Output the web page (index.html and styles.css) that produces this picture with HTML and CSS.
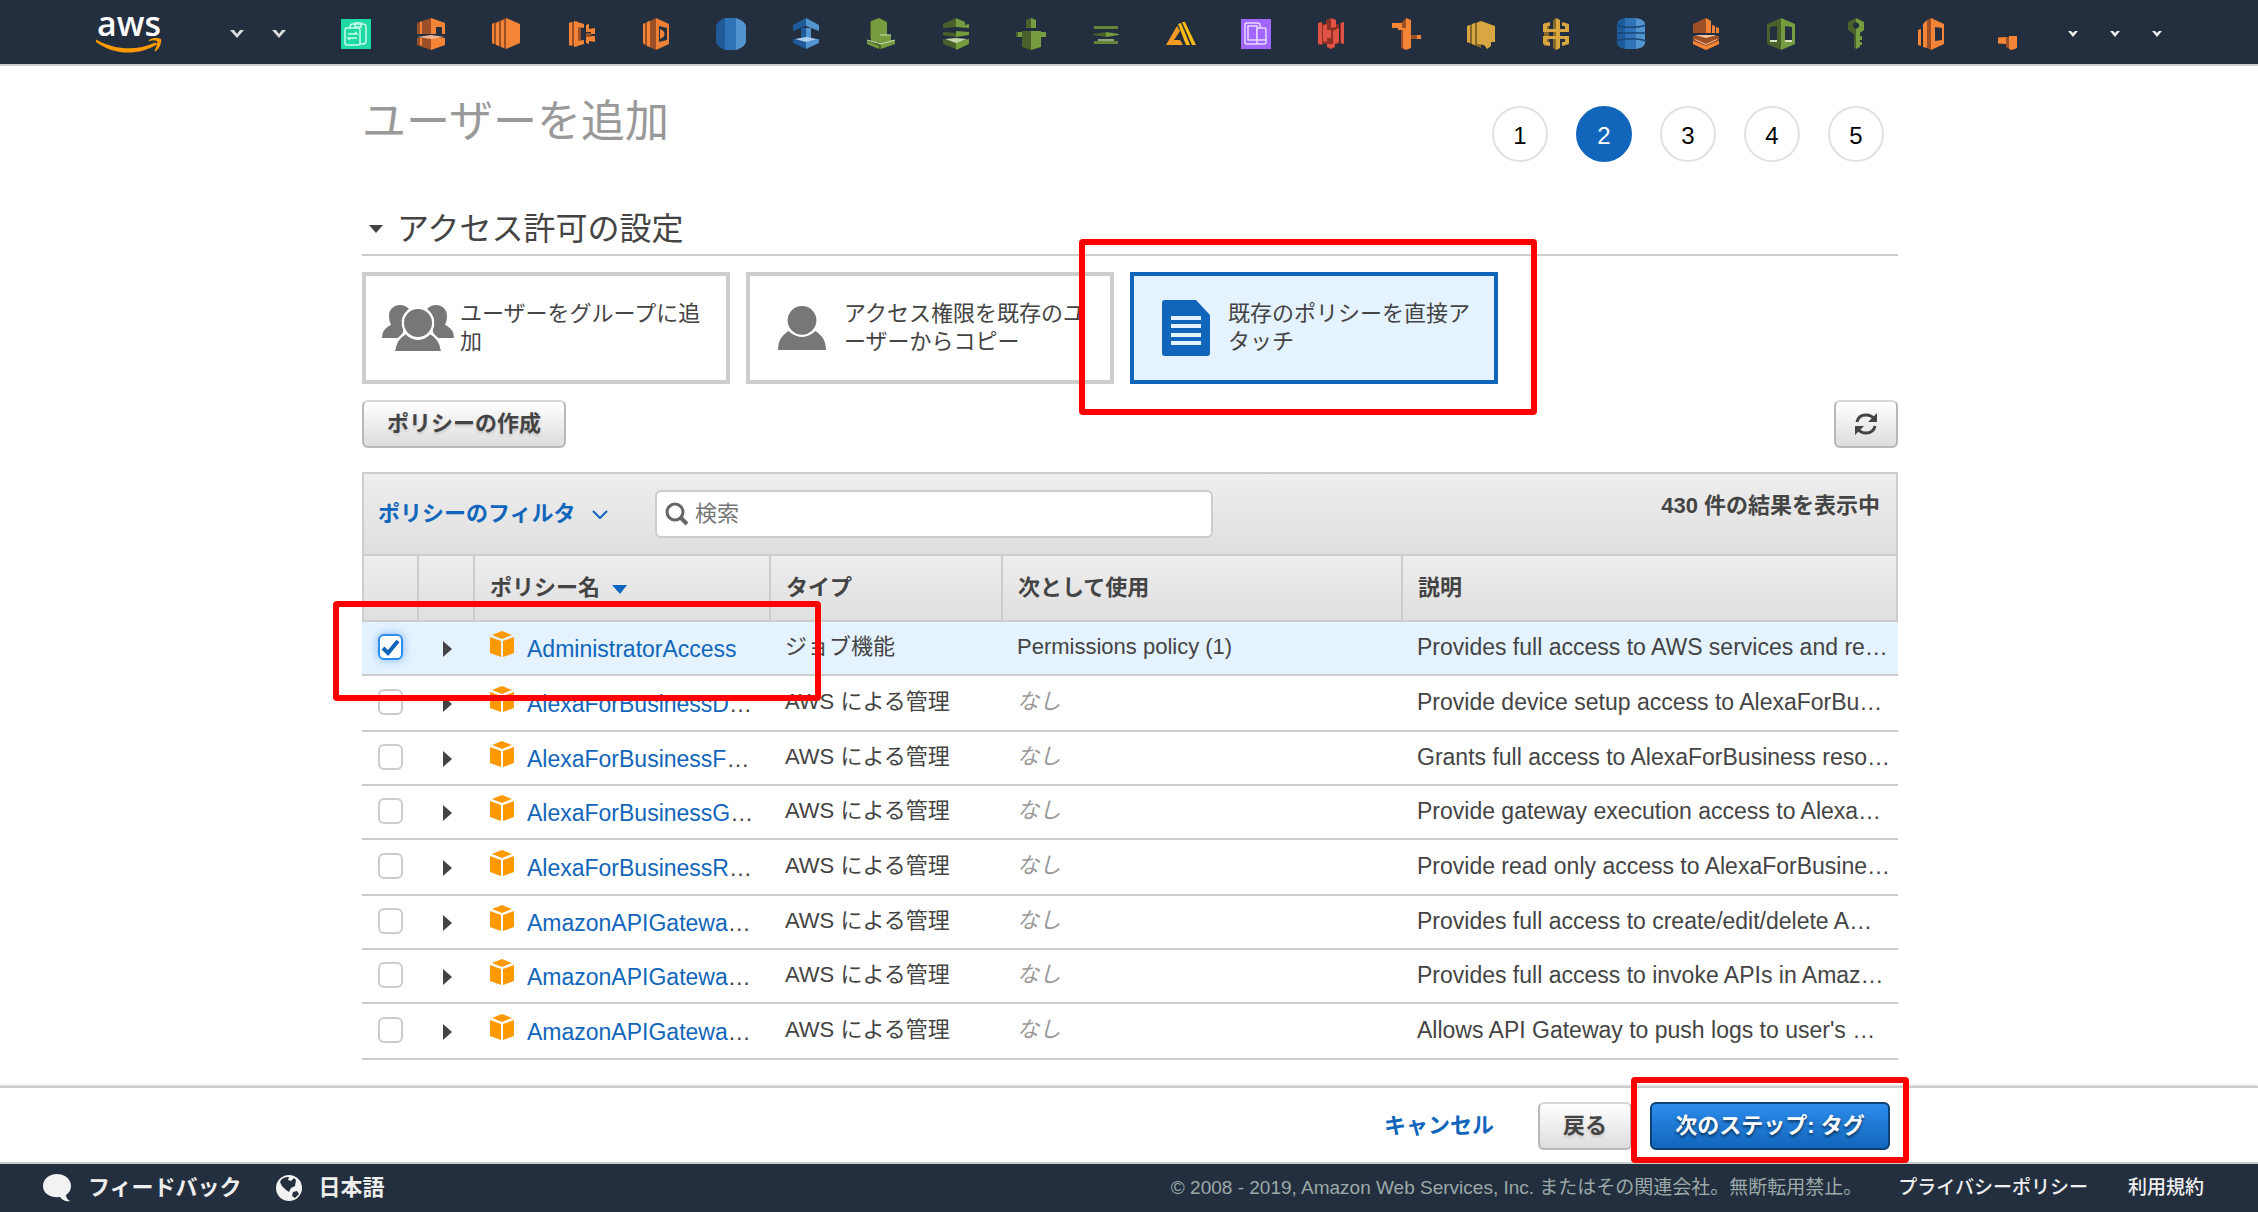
FILE: index.html
```html
<!DOCTYPE html>
<html lang="ja">
<head>
<meta charset="utf-8">
<meta name="viewport" content="width=device-width, initial-scale=1">
<title>ユーザーを追加</title>
<link rel="stylesheet" href="styles.css">
</head>
<body>
<svg class="defs" aria-hidden="true">
  <symbol id="cube" viewBox="0 0 24 26"><path fill="#f90" d="M12 0l10 4-10 4L2 4zM0 6l11 4v16L0 22zM24 6l-11 4v16l11-4z"/></symbol>
  <symbol id="expand" viewBox="0 0 9 16"><path fill="#444" d="M0 0l9 8-9 8z"/></symbol>
  <symbol id="caret" viewBox="0 0 14 8"><path d="M0 0h4l3 4 3-4h4L7 8z"/></symbol>
  <symbol id="caret-small" viewBox="0 0 10 6"><path d="M0 0h3l2 2 2-2h3L5 6z"/></symbol>
</svg>

<header class="topbar">
  <a class="logo" href="#" aria-label="aws">
    <span class="logo-text">aws</span>
    <svg class="logo-smile" viewBox="0 0 66 15" aria-hidden="true"><path fill="#f90" d="M1 2c18 10 40 11 57 3 2-1 4 1 2 2C42 18 17 17 0 4c-1-1 0-3 1-2zM53 2c4-3 10-2 12-1 1 3-1 9-5 12-1 1-2 0-1-1 1-3 3-7 2-9-2-1-5-1-7 0-1 0-2 0-1-1z"/></svg>
  </a>
  <button class="nav-caret" aria-label="サービス"><svg viewBox="0 0 14 8"><use href="#caret"/></svg></button>
  <button class="nav-caret" aria-label="リソースグループ"><svg viewBox="0 0 14 8"><use href="#caret"/></svg></button>
  <nav class="shortcuts" aria-label="ショートカット">
    <a href="#" aria-label="ショートカット 1"><svg viewBox="0 0 32 32"><path fill="#1ed9a4" d="M1 1h30v30H1z"/><g fill="none" stroke="#c8fbe9" stroke-width="1.5"><rect x="10" y="6" width="16" height="20" rx="3"/><rect x="5" y="10" width="15" height="17" rx="2" fill="#1ed9a4"/><path d="M15 5h6v4h-6zM8 16h9l-2-2M17 20H8l2 2"/></g></svg></a>
    <a href="#" aria-label="ショートカット 2"><svg viewBox="0 0 32 32"><path fill="#9d5025" d="M2 5l14-5v16H2zM2 20h14v12L2 27z"/><path fill="#f58536" d="M5 4l2-1v13H5zM16 0l14 5v11h-3V9h-6v7h-5zM16 20h14v7l-14 5zM5 20h2v8l-2-1z"/><path fill="#f2b48c" d="M2 19l14-2 14 2-14 2z"/></svg></a>
    <a href="#" aria-label="ショートカット 3"><svg viewBox="0 0 32 32"><path fill="#9d5025" d="M2 6l14-6v31L2 25z"/><path fill="#f58536" d="M2 6l2-1v21l-2-1zM6 5l3-1v24l-3-1zM11 3l3-1v28l-3-1zM16 0l14 6v19l-14 6z"/></svg></a>
    <a href="#" aria-label="ショートカット 4"><svg viewBox="0 0 32 32"><path fill="#9d5025" d="M4 5l8-2v26l-8-3zM12 8l4 1v14l-4 1zM21 15h5v4h-5z"/><path fill="#f58536" d="M4 5l3-1v24l-3-1zM9 3l10 3v4l-6-1v14l6-1v4L9 29zM21 7l3-1v5l6-1v6h-4v-2h-5zM21 19h5v-1h4v6l-6-1v3l-3-1z"/></svg></a>
    <a href="#" aria-label="ショートカット 5"><svg viewBox="0 0 32 32"><path fill="#9d5025" d="M3 6l13-6v32L3 26z"/><path fill="#f58536" d="M3 6l2-1v21l-2-1zM7 4l3-1v26l-3-1z"/><path fill="#ee8038" fill-rule="evenodd" d="M16 0l13 6v20l-13 6zM19 8v16l8-2V10z"/><path fill="#f58536" d="M20 11c6 2 6 8 0 10z"/></svg></a>
    <a href="#" aria-label="ショートカット 6"><svg viewBox="0 0 32 32"><path fill="#1f5b98" d="M10 0v32c-5-2-9-5-9-9V9c0-4 4-7 9-9z"/><path fill="#2e73b8" d="M10 0h11v32H10z"/><path fill="#5294cf" d="M21 0c6 2 10 5 10 9v14c0 4-4 7-10 9z"/></svg></a>
    <a href="#" aria-label="ショートカット 7"><svg viewBox="0 0 32 32"><path fill="#1f5b98" d="M3 7l13-7v8L3 13zM11 10h5v11h-5zM3 21h13v10L3 25z"/><path fill="#5294cf" d="M16 0l13 7v6L16 8zM16 10h5v11h-5zM16 21h13v4l-13 6z"/><path fill="#a8cdee" d="M5 21l11-2 11 2-11 3z"/></svg></a>
    <a href="#" aria-label="ショートカット 8"><svg viewBox="0 0 32 32"><path fill="#4b612c" d="M5 4l6-2v20l-6-2zM2 22l14 4v5L2 26z"/><path fill="#759c3e" d="M6 3l8-3 8 4v20H6zM15 17h11v5l4 1v3l-14 5v-5l-3-1zM2 23l12 5v3L2 26z"/><path fill="none" stroke="#cfe0b4" d="M2 22l14 4 14-4M15 17h11"/></svg></a>
    <a href="#" aria-label="ショートカット 9"><svg viewBox="0 0 32 32"><path fill="#4b612c" d="M3 6l13-6v9L3 10zM3 14l13 1v4L3 17zM3 21l13 3v7L3 26z"/><path fill="#759c3e" d="M16 0l9 4v3l4-1v4l-13-1zM16 13l13 1v3l-13 2zM16 24l13-3v5l-13 6z"/><path fill="#c3d6a6" d="M5 21l11-1 11 1-11 4z"/></svg></a>
    <a href="#" aria-label="ショートカット 10"><svg viewBox="0 0 32 32"><path fill="#4b612c" d="M11 2l5-2v10h-5zM7 13h9v19l-9-3zM1 14h4v5H1z"/><path fill="#759c3e" d="M16 0l5 2v8h-5zM16 13h10v1h5v5h-5v10l-10 3zM3 14h4v5H3z"/></svg></a>
    <a href="#" aria-label="ショートカット 11"><svg viewBox="0 0 32 32"><path fill="#648437" d="M4 8h24v3H4zM4 23h24v3H4z"/><path fill="#4b612c" d="M3 16l13-2v5L3 17z"/><path fill="#759c3e" d="M16 14l13 2v1l-13 2z"/><path fill="#93a67d" d="M8 21h16v2H8z"/></svg></a>
    <a href="#" aria-label="ショートカット 12"><svg viewBox="0 0 32 32"><path fill="#f49b25" d="M12 8l3 5-6 9h6l3 5H1z"/><path fill="#fdb913" d="M13 6l3-1 9 22h-4zM17 4h3l11 23h-4z"/></svg></a>
    <a href="#" aria-label="ショートカット 13"><svg viewBox="0 0 32 32"><path fill="#a166ff" d="M1 1h30v30H1z"/><g fill="none" stroke="#e7d8ff" stroke-width="1.5"><rect x="5" y="5" width="15" height="21" rx="2"/><rect x="8" y="8" width="9" height="14"/><rect x="17" y="10" width="9" height="16" rx="2" fill="#a166ff"/><path d="M17 22h9"/></g></svg></a>
    <a href="#" aria-label="ショートカット 14"><svg viewBox="0 0 32 32"><path fill="#8c3123" d="M7 6h17v20H7zM11 2l5-2v8h-5zM25 5l4-1v22l-4-1z"/><path fill="#e05243" d="M3 5l4-1v23l-4-1zM8 8l4-2v6h4v8h-4v4l-4-1zM16 0l5 2v7l-5 1zM18 13l6-3v14l-6 3zM12 26h8v3l-4 2-4-2zM26 5l3-1v22l-3-1z"/></svg></a>
    <a href="#" aria-label="ショートカット 15"><svg viewBox="0 0 32 32"><path fill="#9d5025" d="M11 5l5-5v32l-5-2zM21 17h8v4h-8z"/><path fill="#f58536" d="M2 5h10v5h4V0l5 2v28l-5 2-3-2V12H8v-2H2zM27 17h4v4h-4z"/></svg></a>
    <a href="#" aria-label="ショートカット 16"><svg viewBox="0 0 32 32"><path fill="#876929" d="M2 8l14-5v27L2 24z"/><path fill="#d9a741" d="M2 8l3-1v18l-3-1zM7 6l3-1v22l-3-1zM12 5l4-2 14 5v16h-4v4l-4 3-3-4-7-1z"/></svg></a>
    <a href="#" aria-label="ショートカット 17"><svg viewBox="0 0 32 32"><path fill="#876929" d="M13 2l3-2v32l-3-2zM4 5h5v23H4z"/><path fill="#d9a741" d="M16 0l4 2v28l-4 2zM3 6l7-2v4H7v3h18V8h-3V4l7 2v8H3zM3 18h26v8l-7 2v-4h3v-3H7v3h3v4l-7-2z"/></svg></a>
    <a href="#" aria-label="ショートカット 18"><svg viewBox="0 0 32 32"><path fill="#1f5b98" d="M10 0v31c-5-1-8-3-8-7V7c0-4 3-6 8-7z"/><path fill="#2e73b8" d="M10 0h11v31H10z"/><path fill="#5294cf" d="M21 0c6 1 9 3 9 7v17c0 4-3 6-9 7z"/><path fill="none" stroke="#1a4776" stroke-width="1.5" d="M1 7c8 3 22 3 30 0M1 15h30M1 23c8-3 22-3 30 0"/></svg></a>
    <a href="#" aria-label="ショートカット 19"><svg viewBox="0 0 32 32"><path fill="#9d5025" d="M3 6l13-6v15H3zM3 18h26v8l-13 6-13-6z"/><path fill="#f58536" d="M16 0l5 3v12h-5zM22 7l3 1v7h-3zM26 9l3 1v5h-3zM3 23l13 5 13-5v3l-13 6-13-6z"/><path fill="#f5c3a0" d="M5 17h22l-11 3zM5 21l11 5 11-5v1l-11 5-11-5z"/></svg></a>
    <a href="#" aria-label="ショートカット 20"><svg viewBox="0 0 32 32"><path fill="#4b612c" fill-rule="evenodd" d="M2 6l14-6v32L2 26zM5 9v13l7 1V8z"/><path fill="#759c3e" fill-rule="evenodd" d="M16 0l14 6v20l-14 6zM20 8v15l7-1V9z"/><path fill="#d5e2c2" d="M5 22h7v2H5zM20 22h7v2h-7z"/></svg></a>
    <a href="#" aria-label="ショートカット 21"><svg viewBox="0 0 32 32"><path fill="#4b612c" fill-rule="evenodd" d="M16 0L8 4v8l6 4v14l2 1V11l-3-2V6l3-2z"/><path fill="#759c3e" d="M16 0l8 4v8l-4 3v3h2v4h-2v2h2v3h-2v2l-4 2V11l3-2V6l-3-2z"/></svg></a>
    <a href="#" aria-label="ショートカット 22"><svg viewBox="0 0 32 32"><path fill="#9d5025" d="M12 2l4-2v32l-4-2z"/><path fill="#f58536" fill-rule="evenodd" d="M3 12l3-1v17l-3-1zM8 6l4-4v28l-4-1zM16 0l13 6v20l-13 6zM20 9v14l7-1V10z"/></svg></a>
    <a href="#" aria-label="ショートカット 23"><svg viewBox="0 0 32 32"><path fill="#9d5025" d="M8 19h14v13l-6-3v-3H8z"/><path fill="#f58536" d="M8 20l8-1v7l-8-1zM19 18h8v12l-5 2-3-1z"/></svg></a>
  </nav>
  <div class="account-carets">
    <button class="nav-caret small" aria-label="アカウント"><svg viewBox="0 0 10 6"><use href="#caret-small"/></svg></button>
    <button class="nav-caret small" aria-label="リージョン"><svg viewBox="0 0 10 6"><use href="#caret-small"/></svg></button>
    <button class="nav-caret small" aria-label="サポート"><svg viewBox="0 0 10 6"><use href="#caret-small"/></svg></button>
  </div>
</header>

<main class="container page">
  <div class="page-head">
    <h1>ユーザーを追加</h1>
    <ol class="steps">
      <li>1</li>
      <li class="current" aria-current="step">2</li>
      <li>3</li>
      <li>4</li>
      <li>5</li>
    </ol>
  </div>

  <h2 class="section-title">
    <svg viewBox="0 0 14 8" aria-hidden="true"><path fill="#444" d="M0 0h14L7 8z"/></svg>
    アクセス許可の設定
  </h2>

  <div class="cards">
    <button class="card">
      <span class="card-icon"><svg width="72" height="46" viewBox="0 0 72 46"><g fill="#777"><path d="M7 11C7 4 12 0 18 0c4 0 7 2 9 4-5 4-8 9-7 14-1 4 2 5 1 9-2 4-5 6-6 6H0c0-7 4-11 9-13-1-3-2-5-2-9zM65 11c0-7-5-11-11-11-4 0-7 2-9 4 5 4 8 9 7 14 1 4-2 5-1 9 2 4 5 6 6 6h15c0-7-4-11-9-13 1-3 2-5 2-9z"/><path stroke="#fff" stroke-width="2" d="M12 47c1-11 6-16 12-19 6 8 18 8 24 0 6 3 11 8 12 19z"/><ellipse cx="36" cy="18" rx="15" ry="15" stroke="#fff" stroke-width="2"/></g></svg></span>
      <span class="card-text">ユーザーをグループに追加</span>
    </button>
    <button class="card">
      <span class="card-icon"><svg width="48" height="46" viewBox="0 0 50 46"><g fill="#777"><path d="M0 46c0-11 5-16 11-20 8 8 20 8 28 0 6 4 11 9 11 20z"/><ellipse cx="25" cy="15" rx="16" ry="16" stroke="#fff" stroke-width="2"/></g></svg></span>
      <span class="card-text">アクセス権限を既存のユーザーからコピー</span>
    </button>
    <button class="card selected">
      <span class="card-icon"><svg width="48" height="56" viewBox="0 0 48 56"><path fill="#16b" d="M3 0h31l14 15v38a3 3 0 0 1-3 3H3a3 3 0 0 1-3-3V3a3 3 0 0 1 3-3z"/><path stroke="#e5f2ff" stroke-width="4" d="M9 18h30M9 26h30M9 35h30M9 43h30"/></svg></span>
      <span class="card-text">既存のポリシーを直接アタッチ</span>
      <span class="marker marker-card"></span>
    </button>
  </div>

  <div class="tools">
    <button class="btn">ポリシーの作成</button>
    <button class="btn btn-icon" aria-label="更新"><svg width="24" height="24" viewBox="0 0 24 24"><g fill="none" stroke="#444" stroke-width="3"><path d="M3 10c1-5 5-7 9-7 4 0 6 1 8 4M21 14c-1 5-5 7-9 7-4 0-6-1-8-4"/></g><path fill="#444" d="M23 1v9h-9zM1 23v-9h9z"/></svg></button>
  </div>

  <section class="policies">
    <div class="filterbar">
      <button class="filter">ポリシーのフィルタ <svg width="16" height="9" viewBox="0 0 16 9" aria-hidden="true"><path fill="none" stroke="#16b" stroke-width="2" d="M1 1l7 7 7-7"/></svg></button>
      <label class="search">
        <svg width="24" height="24" viewBox="0 0 24 24" aria-hidden="true"><g fill="none" stroke="#666" stroke-width="3"><circle cx="10" cy="10" r="8"/><path stroke-width="4" d="M16 16l6 6"/></g></svg>
        <input type="text" placeholder="検索" aria-label="検索">
      </label>
      <span class="count">430 件の結果を表示中</span>
    </div>
    <table>
      <colgroup><col class="c-check"><col class="c-expand"><col class="c-name"><col class="c-type"><col class="c-used"><col></colgroup>
      <thead>
        <tr><th></th><th></th><th>ポリシー名 <svg class="sort" width="15" height="9" viewBox="0 0 15 9" aria-hidden="true"><path fill="#16b" d="M0 0h15L8 9z"/></svg></th><th>タイプ</th><th>次として使用</th><th>説明</th></tr>
      </thead>
      <tbody>
        <tr class="picked">
          <td class="check"><input type="checkbox" checked aria-label="AdministratorAccess"><span class="marker marker-row"></span></td>
          <td class="expand"><button aria-label="展開"><svg><use href="#expand"/></svg></button></td>
          <td class="name"><svg><use href="#cube"/></svg><span><a href="#">AdministratorAccess</a></span></td>
          <td>ジョブ機能</td><td>Permissions policy (1)</td><td class="desc">Provides full access to AWS services and re…</td>
        </tr>
        <tr>
          <td class="check"><input type="checkbox" aria-label="AlexaForBusinessD"></td>
          <td class="expand"><button aria-label="展開"><svg><use href="#expand"/></svg></button></td>
          <td class="name"><svg><use href="#cube"/></svg><span><a href="#">AlexaForBusinessD</a>…</span></td>
          <td>AWS による管理</td><td class="none">なし</td><td class="desc">Provide device setup access to AlexaForBu…</td>
        </tr>
        <tr>
          <td class="check"><input type="checkbox" aria-label="AlexaForBusinessF"></td>
          <td class="expand"><button aria-label="展開"><svg><use href="#expand"/></svg></button></td>
          <td class="name"><svg><use href="#cube"/></svg><span><a href="#">AlexaForBusinessF</a>…</span></td>
          <td>AWS による管理</td><td class="none">なし</td><td class="desc">Grants full access to AlexaForBusiness reso…</td>
        </tr>
        <tr>
          <td class="check"><input type="checkbox" aria-label="AlexaForBusinessG"></td>
          <td class="expand"><button aria-label="展開"><svg><use href="#expand"/></svg></button></td>
          <td class="name"><svg><use href="#cube"/></svg><span><a href="#">AlexaForBusinessG</a>…</span></td>
          <td>AWS による管理</td><td class="none">なし</td><td class="desc">Provide gateway execution access to Alexa…</td>
        </tr>
        <tr>
          <td class="check"><input type="checkbox" aria-label="AlexaForBusinessR"></td>
          <td class="expand"><button aria-label="展開"><svg><use href="#expand"/></svg></button></td>
          <td class="name"><svg><use href="#cube"/></svg><span><a href="#">AlexaForBusinessR</a>…</span></td>
          <td>AWS による管理</td><td class="none">なし</td><td class="desc">Provide read only access to AlexaForBusine…</td>
        </tr>
        <tr>
          <td class="check"><input type="checkbox" aria-label="AmazonAPIGatewa"></td>
          <td class="expand"><button aria-label="展開"><svg><use href="#expand"/></svg></button></td>
          <td class="name"><svg><use href="#cube"/></svg><span><a href="#">AmazonAPIGatewa</a>…</span></td>
          <td>AWS による管理</td><td class="none">なし</td><td class="desc">Provides full access to create/edit/delete A…</td>
        </tr>
        <tr>
          <td class="check"><input type="checkbox" aria-label="AmazonAPIGatewa"></td>
          <td class="expand"><button aria-label="展開"><svg><use href="#expand"/></svg></button></td>
          <td class="name"><svg><use href="#cube"/></svg><span><a href="#">AmazonAPIGatewa</a>…</span></td>
          <td>AWS による管理</td><td class="none">なし</td><td class="desc">Provides full access to invoke APIs in Amaz…</td>
        </tr>
        <tr>
          <td class="check"><input type="checkbox" aria-label="AmazonAPIGatewa"></td>
          <td class="expand"><button aria-label="展開"><svg><use href="#expand"/></svg></button></td>
          <td class="name"><svg><use href="#cube"/></svg><span><a href="#">AmazonAPIGatewa</a>…</span></td>
          <td>AWS による管理</td><td class="none">なし</td><td class="desc">Allows API Gateway to push logs to user's …</td>
        </tr>
      </tbody>
    </table>
  </section>
</main>

<div class="actions">
  <div class="container actions-inner">
    <a class="cancel" href="#">キャンセル</a>
    <button class="btn back">戻る</button>
    <div class="next"><button class="btn primary">次のステップ: タグ</button><span class="marker marker-next"></span></div>
  </div>
</div>

<footer class="footer">
  <a class="feedback" href="#"><svg width="28" height="28" viewBox="0 0 28 28" aria-hidden="true"><path fill="#f2f2f2" d="M14 0c8 0 14 5 14 12 0 4-2 7-5 9 0 3 2 5 4 6-4 1-8-1-10-4C8 24 0 20 0 12 0 5 6 0 14 0z"/></svg>フィードバック</a>
  <a class="language" href="#"><svg width="26" height="27" viewBox="0 0 26 27" aria-hidden="true"><circle cx="13" cy="13" r="13" fill="#f2f2f2"/><path fill="#232f3e" d="M5 5c3-3 6-3 8-3l-1 3 3 1 3-3 2 2-1 6-4 2-2 4-3-2-4-4-2-4zM17 17l4-1 2 3-4 4-3-2z"/></svg>日本語</a>
  <span class="copyright">© 2008 - 2019, Amazon Web Services, Inc. またはその関連会社。無断転用禁止。</span>
  <a class="legal" href="#">プライバシーポリシー</a>
  <a class="legal" href="#">利用規約</a>
</footer>
</body>
</html>
```
FILE: styles.css
```css
* { box-sizing: border-box; }

body {
  margin: 0;
  min-height: 100vh;
  display: flex;
  flex-direction: column;
  background: #fff;
  color: #444;
  font: 22px/28px "Liberation Sans", "Noto Sans CJK JP", sans-serif;
}

button, input { font: inherit; color: inherit; }
button { cursor: pointer; }
a { color: #16b; text-decoration: none; }
svg { display: block; flex: none; }
.defs { position: absolute; width: 0; height: 0; }

.container { width: 100%; max-width: 1538px; margin: 0 auto; padding-left: 2px; }

/* Top navigation */
.topbar {
  display: flex;
  align-items: center;
  height: 66px;
  padding: 4px 96px 0;
  background: #232f3e;
  border-bottom: 2px solid #ccc;
}
.logo { width: 66px; margin-right: 68px; }
.logo-text {
  display: block;
  height: 22px;
  color: #fff;
  font: 600 34px/14px "Open Sans", sans-serif;
  text-align: center;
}
.logo-smile { width: 66px; height: 15px; }
.nav-caret { width: 14px; margin-right: 28px; padding: 0; border: 0; background: none; }
.nav-caret svg { width: 100%; height: 8px; fill: #ddd; }
.nav-caret.small { width: 10px; margin: 0; }
.nav-caret.small svg { height: 6px; fill: #eee; }
.shortcuts { flex: 1; display: flex; justify-content: space-between; margin: 0 46px 0 26px; }
.shortcuts svg { width: 32px; height: 32px; }
.account-carets { display: flex; gap: 32px; }

/* Page heading and steps */
.page { flex: 1; }
.page-head { display: flex; justify-content: space-between; height: 134px; padding: 28px 14px 0 0; }
h1 { margin: 0; color: #999; font-size: 44px; font-weight: 400; line-height: 56px; }
.steps { display: flex; gap: 28px; margin: 12px 0 0; padding: 0; list-style: none; }
.steps li {
  width: 56px;
  height: 56px;
  border: 2px solid #e1e1e1;
  border-radius: 50%;
  color: #000;
  font-size: 24px;
  line-height: 56px;
  text-align: center;
}
.steps .current { border-color: #16b; background: #16b; color: #fff; }

.section-title {
  display: flex;
  align-items: center;
  gap: 14px;
  height: 56px;
  margin: 0 0 16px;
  padding: 4px 0 0 7px;
  border-bottom: 2px solid #ccc;
  font-size: 32px;
  font-weight: 400;
}
.section-title svg { width: 14px; height: 8px; }

/* Permission method cards */
.cards { display: flex; gap: 16px; margin-bottom: 16px; }
.card {
  position: relative;
  display: flex;
  align-items: center;
  width: 368px;
  height: 112px;
  padding: 0 12px 0 16px;
  border: 4px solid #ccc;
  background: #fff;
  text-align: left;
}
.card.selected { border-color: #16b; background: #e5f2ff; }
.card-icon { display: flex; justify-content: center; width: 72px; margin-right: 6px; flex: none; }

/* Red callout frames */
.marker { position: absolute; z-index: 2; border: 6px solid #f00; border-radius: 4px; pointer-events: none; }
.marker-card { inset: -37px -43px -35px -55px; }
.marker-row { left: -29px; top: -21px; width: 488px; height: 100px; }
.marker-next { inset: -25px -19px -13px; }

/* Buttons */
.btn {
  height: 48px;
  padding: 0 23px;
  border: 2px solid #b8b8b8;
  border-top-color: #d8d8d8;
  border-radius: 6px;
  background: linear-gradient(#fff, #ddd);
  font-weight: 700;
  text-shadow: 0 2px 3px rgba(0, 0, 0, .15);
}
.btn-icon { width: 64px; padding: 0 18px; }
.btn.primary {
  width: 240px;
  padding: 0;
  border-color: #0c4178;
  background: linear-gradient(#2d8cec, #16b);
  color: #fff;
  text-shadow: 0 2px 3px rgba(0, 0, 0, .6);
}
.tools { display: flex; justify-content: space-between; margin-bottom: 24px; }

/* Policy list */
.filterbar {
  display: flex;
  align-items: center;
  height: 84px;
  padding: 0 16px 0 14px;
  border: 2px solid #ccc;
  background: linear-gradient(#eee, #dfdfdf);
}
.filter {
  display: flex;
  align-items: center;
  gap: 16px;
  width: 277px;
  padding: 0;
  border: 0;
  background: none;
  color: #16b;
  font-weight: 700;
}
.search {
  display: flex;
  align-items: center;
  gap: 6px;
  width: 558px;
  height: 48px;
  padding: 0 8px;
  border: 2px solid #ccc;
  border-radius: 6px;
  background: #fff;
}
.search input { flex: 1; min-width: 0; padding: 0; border: 0; outline: 0; background: none; }
.search input::placeholder { color: #777; }
.count { margin: 0 0 16px auto; font-weight: 700; }

table { width: 100%; border-collapse: separate; border-spacing: 0; table-layout: fixed; }
.c-check { width: 57px; }
.c-expand { width: 56px; }
.c-name { width: 296px; }
.c-type { width: 232px; }
.c-used { width: 400px; }
th {
  height: 66px;
  padding: 0 15px;
  border-right: 2px solid #ccc;
  border-bottom: 2px solid #ccc;
  background: linear-gradient(#eee, #dfdfdf);
  text-align: left;
}
th:first-child { border-left: 2px solid #ccc; }
.sort { display: inline-block; margin-left: 6px; vertical-align: 1px; }
td {
  height: 54px;
  padding: 0 0 2px 14px;
  border-bottom: 2px solid #ccc;
  white-space: nowrap;
}
tr:nth-child(3n + 2) td { height: 56px; }
.picked td { background: #e5f2ff; }
.none { color: #999; font-style: italic; }
.desc { font-size: 23px; }

.check { position: relative; padding: 0 0 2px 16px; }
.check input {
  appearance: none;
  display: block;
  width: 25px;
  height: 26px;
  margin: 0;
  border: 2px solid #ccc;
  border-radius: 6px;
  background: #fff;
}
.check input:checked {
  border-color: #2d8cec;
  background: #fff url("data:image/svg+xml,%3Csvg xmlns='http://www.w3.org/2000/svg' viewBox='0 0 21 22'%3E%3Cpath fill='none' stroke='%231166bb' stroke-width='4' d='M3 12l5 5L18 5'/%3E%3C/svg%3E") center / 100% no-repeat;
  box-shadow: 0 0 10px #7db8f5;
}
.expand { padding: 2px 0 0 24px; }
.expand button { display: block; padding: 0; border: 0; background: none; }
.expand svg { width: 9px; height: 16px; }
.name { padding: 0 0 3px; font-size: 23px; }
.name svg { display: inline-block; width: 24px; height: 26px; margin: 0 13px 0 15px; vertical-align: 0; }
.name span { display: inline-block; }

/* Wizard actions */
.actions { height: 78px; border-top: 2px solid #ccc; border-bottom: 2px solid #ccc; box-shadow: 0 -1px 2px rgba(0, 0, 0, .15); background: #fff; }
.actions-inner { display: flex; align-items: center; justify-content: flex-end; height: 76px; padding-right: 8px; }
.cancel { margin-right: 44px; font-weight: 700; }
.next { position: relative; margin-left: 18px; }

/* Footer */
.footer {
  display: flex;
  align-items: center;
  height: 48px;
  padding: 0 54px 0 43px;
  background: #232f3e;
  color: #9baaa9;
  font-size: 19px;
}
.footer a { color: #eee; }
.feedback, .language { display: flex; align-items: center; font-size: 22px; font-weight: 700; }
.feedback { gap: 17px; margin-right: 34px; }
.language { gap: 17px; }
.copyright { margin: 0 -4px 0 auto; }
.legal { margin-left: 40px; font-weight: 500; }
```
